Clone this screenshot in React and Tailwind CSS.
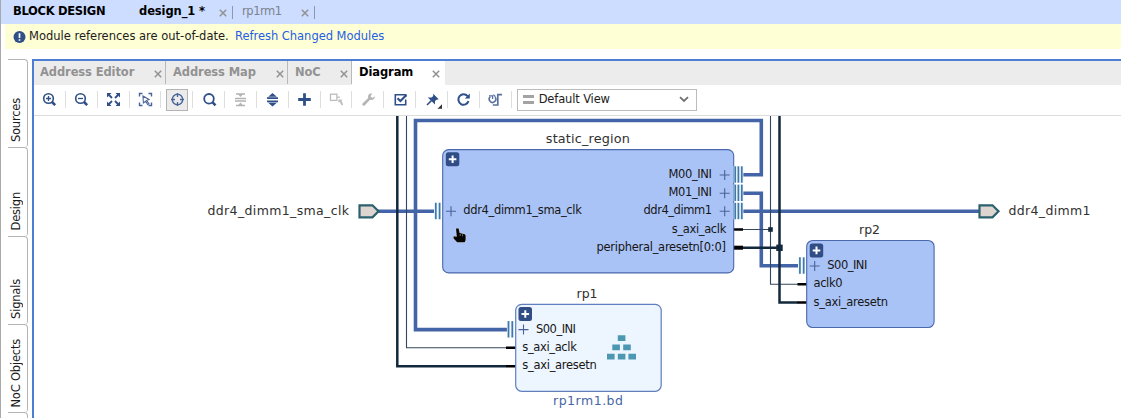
import React from "react";

const NAVY = "#2f4f88";

function Close({ className = "" }) {
  return (
    <svg className={"shrink-0 " + className} width="8" height="8" viewBox="0 0 8 8">
      <path d="M0.8 0.8L7.2 7.2M7.2 0.8L0.8 7.2" stroke="#929292" strokeWidth="1.5" fill="none" />
    </svg>
  );
}

const icons = [
  // zoom in
  <g fill="none" stroke={NAVY}>
    <circle cx="7.5" cy="7.5" r="4.8" strokeWidth="1.6" />
    <path d="M11 11L14.2 14.2" strokeWidth="2.5" />
    <path d="M7.5 5v5M5 7.5h5" strokeWidth="1.3" />
  </g>,
  // zoom out
  <g fill="none" stroke={NAVY}>
    <circle cx="7.5" cy="7.5" r="4.8" strokeWidth="1.6" />
    <path d="M11 11L14.2 14.2" strokeWidth="2.5" />
    <path d="M5 7.5h5" strokeWidth="1.3" />
  </g>,
  // fit
  <g fill={NAVY} stroke={NAVY} strokeWidth="1.8">
    <path d="M3 3L7 7M14 3L10 7M3 14L7 10M14 14L10 10" />
    <path stroke="none" d="M2 2h4.5L2 6.5zM15 2v4.5L10.5 2zM2 15v-4.5L6.5 15zM15 15h-4.5L15 10.5z" />
  </g>,
  // fit selection
  <g fill="none" stroke="#4a6699" strokeWidth="1.4">
    <path d="M2.5 5.5v-3h3M11.5 2.5h3v3M14.5 11.5v3h-3M5.5 14.5h-3v-3" />
    <path d="M6 5L12 8.5L9.6 9.4L12 12.8L10.7 13.6L8.6 10.3L6.4 12z" strokeWidth="1.1" />
  </g>,
  // crosshair
  <g fill="none" stroke="#4a6699">
    <circle cx="8.5" cy="8.5" r="5.2" strokeWidth="1.4" />
    <path d="M8.5 2v4M8.5 11v4M2 8.5h4M11 8.5h4" strokeWidth="1.3" />
  </g>,
  // search
  <g fill="none" stroke={NAVY}>
    <circle cx="8" cy="7.8" r="4.8" strokeWidth="1.8" />
    <path d="M11.4 11.2L14.5 14.3" strokeWidth="2.6" />
  </g>,
  // collapse
  <g fill="#b3b3b3">
    <path d="M3 6.8h11v1.5H3zM3 9.3h11v1.5H3zM4 2.2h9v1.5h-2.5L8.5 6L6.5 3.7H4zM4 15.3h9v-1.5h-2.5L8.5 11.5L6.5 13.8H4z" />
  </g>,
  // expand
  <g fill={NAVY}>
    <path d="M3 6.3h11v1.8H3zM3 9.4h11v1.8H3zM8.5 2L12.8 5.7H4.2zM8.5 15.5L12.8 11.8H4.2z" />
  </g>,
  // add
  <path d="M8.5 2.2v12.6M2.2 8.5h12.6" stroke={NAVY} strokeWidth="2.8" fill="none" />,
  // make external
  <g fill="none" stroke="#bdbdbd" strokeWidth="1.3">
    <rect x="2.5" y="3.2" width="6.4" height="6.2" />
    <path d="M8.9 6.2h3" />
    <path d="M10.4 8.4h4.2l-1.2 1.4l1.8 3.8l-1.4 1l-2.2-3.8l-1.2 1.2z" fill="#bdbdbd" stroke="none" />
  </g>,
  // wrench
  <path d="M14.8 5.2L12.4 7.1L10.4 5.3L12.2 2.6C9.4 2 7.4 4.2 8.2 6.9L2.5 12.4C1.6 13.6 3.2 15.4 4.6 14.4L10.1 8.8C12.8 9.6 15 7.8 14.8 5.2z" fill="#b5b5b5" />,
  // validate
  <g fill="none" stroke={NAVY}>
    <path d="M13.7 8.5v5.3H3.3V3.7h10.4v2" strokeWidth="1.6" />
    <path d="M5.5 7.2L8.4 10.1L14.4 4.1" strokeWidth="2.1" />
  </g>,
  // pin
  <g fill={NAVY}>
    <path d="M9.2 2.7L14.7 8.2L12.6 8.7L11 10.1L11 13.4L3.8 6.6L7.6 6.6L9.2 4.9z" />
    <path d="M7.4 9.6L3 14" stroke={NAVY} strokeWidth="1.5" />
    <path d="M18 13.3v4.5H13.5z" fill="#333" />
  </g>,
  // refresh
  <g fill="none" stroke={NAVY} strokeWidth="2">
    <path d="M12.6 5.2A5.2 5.2 0 1 0 13.5 10.2" />
    <path d="M14.8 2.5v5h-5z" fill={NAVY} stroke="none" />
  </g>,
  // regenerate layout
  <g fill="none" stroke="#58709f" strokeWidth="1.5">
    <path d="M3.2 5.8A3.3 3.3 0 1 0 8.2 6.2" />
    <path d="M2 4.9h3.6v3" strokeWidth="1.3" />
    <path d="M6.4 3.6l2 2.2" strokeWidth="1.3" />
    <path d="M5.8 14h5V3.6h4.2" strokeWidth="1.7" />
  </g>,
];

function Toolbar() {
  return (
    <div className="flex h-[31px] shrink-0 items-center border-b border-[#dcdcdc] bg-white pb-px">
      {icons.map((icon, i) => (
        <div
          key={i}
          className="flex h-[17px] w-[31.85px] shrink-0 items-center justify-center border-r border-[#dedede] pl-px"
        >
          <div
            className={
              i === 4
                ? "flex h-[22px] w-[22px] shrink-0 items-center justify-center border border-[#b4b4b4] bg-[#ebebeb]"
                : "flex h-[22px] w-[22px] shrink-0 items-center justify-center"
            }
          >
            <svg width="17" height="17" viewBox="0 0 17 17" className="shrink-0 overflow-visible">
              {icon}
            </svg>
          </div>
        </div>
      ))}
      <div className="ml-[5px] flex h-[22px] w-[180px] shrink-0 items-center border border-[#bcbcbc] bg-white pr-[7px] pl-[5px]">
        <div className="flex w-[11px] flex-col gap-[3px]">
          <div className="h-[3px] bg-[#a3a3a3]" />
          <div className="h-[3px] bg-[#a3a3a3]" />
        </div>
        <span className="ml-[5px] text-[11.5px] tracking-[-0.15px] text-[#1c1c1c]">Default View</span>
        <svg className="ml-auto" width="10" height="7" viewBox="0 0 10 7">
          <path d="M1 1.2L5 5L9 1.2" stroke="#707070" strokeWidth="1.8" fill="none" />
        </svg>
      </div>
    </div>
  );
}

function Tab({ label, className }) {
  return (
    <div className={"flex h-[23px] shrink-0 items-center justify-between " + className}>
      <span className="text-[11.5px] font-bold tracking-[-0.1px]">{label}</span>
      <Close className="mt-[2px]" />
    </div>
  );
}

function SideTab({ label }) {
  return (
    <div className="flex h-[88.3px] shrink-0 items-end justify-center rounded-tr-[4px] rounded-br-[3px] border-t border-r border-[#b5b5b5] pr-[3px] pb-[5px]">
      <span className="rotate-180 text-[11.5px] leading-[16px] tracking-[-0.2px] whitespace-nowrap text-[#1c1c1c] [writing-mode:vertical-rl]">
        {label}
      </span>
    </div>
  );
}

function Label({ x, y, w, end, children, size = 11.5, fill = "#161616" }) {
  return (
    <text
      x={end ? x - w : x}
      y={y - 0.4}
      fontSize={size}
      fill={fill}
      textLength={w}
      lengthAdjust="spacing"
    >
      {children}
    </text>
  );
}

function ExpandBox({ x, y }) {
  return (
    <g>
      <rect x={x} y={y} width="13.5" height="14" rx="2.5" fill="#304d86" />
      <path d={`M${x + 6.8} ${y + 3.2}v7.6M${x + 3} ${y + 7}h7.6`} stroke="#fff" strokeWidth="2" />
    </g>
  );
}

function Plus({ x, y }) {
  return <path d={`M${x - 5} ${y}h10M${x} ${y - 5}v10`} stroke="#4a6297" strokeWidth="1.1" />;
}

function Bars({ xs, y }) {
  return xs.map((x) => (
    <g key={x}>
      <path d={`M${x} ${y - 8.3}v16.6`} stroke="#e6f2fa" strokeWidth="3.2" />
      <path d={`M${x} ${y - 8.2}v16.4`} stroke="#3f79ab" strokeWidth="1.7" />
    </g>
  ));
}

function Diagram() {
  return (
    <svg
      className="block shrink-0"
      width="1087"
      height="302"
      viewBox="34 116 1087 302"
      fill="none"
      fontFamily='"DejaVu Sans", sans-serif'
    >
      <g stroke="#4365a8" strokeWidth="3.6">
        <path d="M742 174.8H761.3V120.5H415.5V329.6H507" />
        <path d="M378 211.3H434" />
        <path d="M742 211.3H979" />
        <path d="M742 193.2H761.3V265.8H798" />
      </g>
      <path d="M406.5 116V347.8H506M770.5 116V284.2H798M742 229.5H770" stroke="#34475c" strokeWidth="1.1" />
      <path d="M397.3 116V366.2H506M779.5 116V302.4H798M742 247.7H779" stroke="#12283c" strokeWidth="2.5" />
      <rect x="768.2" y="227.2" width="4.6" height="4.6" fill="#12283c" />
      <rect x="776.3" y="244.6" width="6.4" height="6.4" fill="#12283c" />
      <path d="M733 229.5H743M506 347.8H515.5M506 366.2H515.5M797.5 284.2H807M797.5 302.4H807" stroke="#000" strokeWidth="2.5" />
      <path d="M733 247.7H743" stroke="#000" strokeWidth="4" />

      <rect x="442.7" y="149.6" width="291" height="123.3" rx="6" fill="#aac3f7" stroke="#4a69ab" strokeWidth="1.1" />
      <rect x="806.7" y="240.5" width="127.4" height="87" rx="6" fill="#aac3f7" stroke="#4a69ab" strokeWidth="1.1" />
      <rect x="515.7" y="304.3" width="145.5" height="87" rx="6" fill="#edf5ff" stroke="#5f7fbe" strokeWidth="1.2" />

      <Bars xs={[435.8, 439.6]} y={211} />
      <Bars xs={[735.2, 738.4, 741.8]} y={174.5} />
      <Bars xs={[735.2, 738.4, 741.8]} y={192.8} />
      <Bars xs={[735.2, 738.4, 741.8]} y={211} />
      <Bars xs={[799.9, 803.7]} y={265.5} />
      <Bars xs={[508.5, 512.3]} y={329.3} />

      <ExpandBox x={445.8} y={152.3} />
      <ExpandBox x={518.5} y={307} />
      <ExpandBox x={809.7} y={243.4} />

      <Plus x={451} y={211.3} />
      <Plus x={724.7} y={175} />
      <Plus x={724.7} y={193.2} />
      <Plus x={724.7} y={211.3} />
      <Plus x={814.7} y={266} />
      <Plus x={523.5} y={329.6} />

      <path d="M359.5 205.3H372.5L378.5 211.3L372.5 217.3H359.5Z" fill="#ded5d0" stroke="#2b606f" strokeWidth="2.2" />
      <path d="M979.5 205.3H992.5L998.5 211.3L992.5 217.3H979.5Z" fill="#ded5d0" stroke="#2b606f" strokeWidth="2.2" />

      <Label x={545.8} y={143.5} w={84} size={12.8} fill="#303030">static_region</Label>
      <Label x={576.5} y={298.2} w={21} size={12.5} fill="#303030">rp1</Label>
      <Label x={859} y={234.7} w={21} size={12.5} fill="#303030">rp2</Label>
      <Label x={207.5} y={215.6} w={141.5} size={12.5} fill="#303030">ddr4_dimm1_sma_clk</Label>
      <Label x={1008.5} y={215.6} w={82} size={12.5} fill="#303030">ddr4_dimm1</Label>
      <Label x={553} y={405} w={70} size={12.5} fill="#4565a5">rp1rm1.bd</Label>

      <Label x={463.3} y={214.8} w={118.5}>ddr4_dimm1_sma_clk</Label>
      <Label x={712} y={178.6} w={43.5} end>M00_INI</Label>
      <Label x={712} y={196.8} w={43.5} end>M01_INI</Label>
      <Label x={712} y={214.8} w={68.5} end>ddr4_dimm1</Label>
      <Label x={726.3} y={233} w={54.5} end>s_axi_aclk</Label>
      <Label x={726} y={251.3} w={129.5} end>peripheral_aresetn[0:0]</Label>
      <Label x={536} y={333.2} w={40}>S00_INI</Label>
      <Label x={522.3} y={351.3} w={54.5}>s_axi_aclk</Label>
      <Label x={522.3} y={369.7} w={74.5}>s_axi_aresetn</Label>
      <Label x={827.3} y={269.5} w={40}>S00_INI</Label>
      <Label x={813.5} y={287.6} w={29}>aclk0</Label>
      <Label x={813.5} y={306} w={74.5}>s_axi_aresetn</Label>

      <path
        d="M617.8 335.3h7.6v5.6h-7.6zM612.3 344.6h7.6v5.6h-7.6zM623.2 344.6h7.6v5.6h-7.6zM607 353.8h7.6v5.6h-7.6zM617.8 353.8h7.6v5.6h-7.6zM628.4 353.8h7.6v5.6h-7.6z"
        fill="#4c98b3"
      />
      <path
        d="M456 228.6h2.6l1 4.4l5.2 1.2l0.8 1.4v4.6l-1 2h-7.4l-3.6-3.6v-2.4l3.2 0.6z"
        fill="#050505"
        stroke="#d9d4cc"
        strokeWidth="0.9"
        paintOrder="stroke"
      />
      <path d="M460.2 234v2M462.5 234.3v2" stroke="#b9b9b9" strokeWidth="0.6" />
    </svg>
  );
}

export default function App() {
  return (
    <div className='flex h-[418px] w-[1121px] flex-col overflow-hidden border-l border-[#a9a9a9] bg-white font-["DejaVu_Sans",sans-serif] whitespace-nowrap'>
      <div className="flex h-6 shrink-0 items-center bg-[#ccddff] pl-[12px] text-[11.5px] text-black">
        <span className="w-[126px] font-bold tracking-[-0.3px]">BLOCK DESIGN</span>
        <span className="w-[80px] font-bold tracking-[-0.1px]">design_1 *</span>
        <Close className="mt-px" />
        <div className="ml-[5px] h-[13px] w-px bg-[#8f98aa]" />
        <span className="ml-[9px] w-[59px] tracking-[-0.45px] text-[#7d828d]">rp1rm1</span>
        <Close className="mt-px" />
        <div className="ml-[5px] h-[13px] w-px bg-[#8f98aa]" />
      </div>
      <div className="ml-[4px] flex h-[25px] shrink-0 items-center bg-[#ffffd5] pl-[8px] text-[11.5px] text-[#1c1c1c]">
        <svg width="13" height="12" viewBox="0 0 13 12">
          <circle cx="6.5" cy="6" r="6" fill="#2f4f88" />
          <path d="M6.5 2.2V7M6.5 8.2V9.8" stroke="#fff" strokeWidth="1.7" />
        </svg>
        <span className="ml-[3px] w-[206px] pt-px">Module references are out-of-date.</span>
        <span className="pt-px tracking-[-0.03px] text-[#245ee4]">Refresh Changed Modules</span>
      </div>
      <div className="mt-[10px] flex min-h-0 grow">
        <div className="mr-[4px] ml-[7px] flex w-[20px] shrink-0 flex-col">
          <SideTab label="Sources" />
          <SideTab label="Design" />
          <SideTab label="Signals" />
          <SideTab label="NoC Objects" />
          <SideTab label="" />
        </div>
        <div className="flex min-w-0 grow flex-col border-t-2 border-l-2 border-[#4c7ed3]">
          <div className="flex h-6 shrink-0 bg-[#ececec] text-[#929292]">
            <Tab label="Address Editor" className="w-[132px] border-r border-[#b9b9b9] pr-[3px] pl-[6px]" />
            <Tab label="Address Map" className="w-[122px] border-r border-[#b9b9b9] pr-[3px] pl-[7px]" />
            <Tab label="NoC" className="w-[64px] border-r border-[#b9b9b9] pr-[3px] pl-[7px]" />
            <Tab label="Diagram" className="h-[24px] w-[93px] bg-white pr-[5px] pb-px pl-[7px] text-black" />
          </div>
          <Toolbar />
          <Diagram />
        </div>
      </div>
    </div>
  );
}
